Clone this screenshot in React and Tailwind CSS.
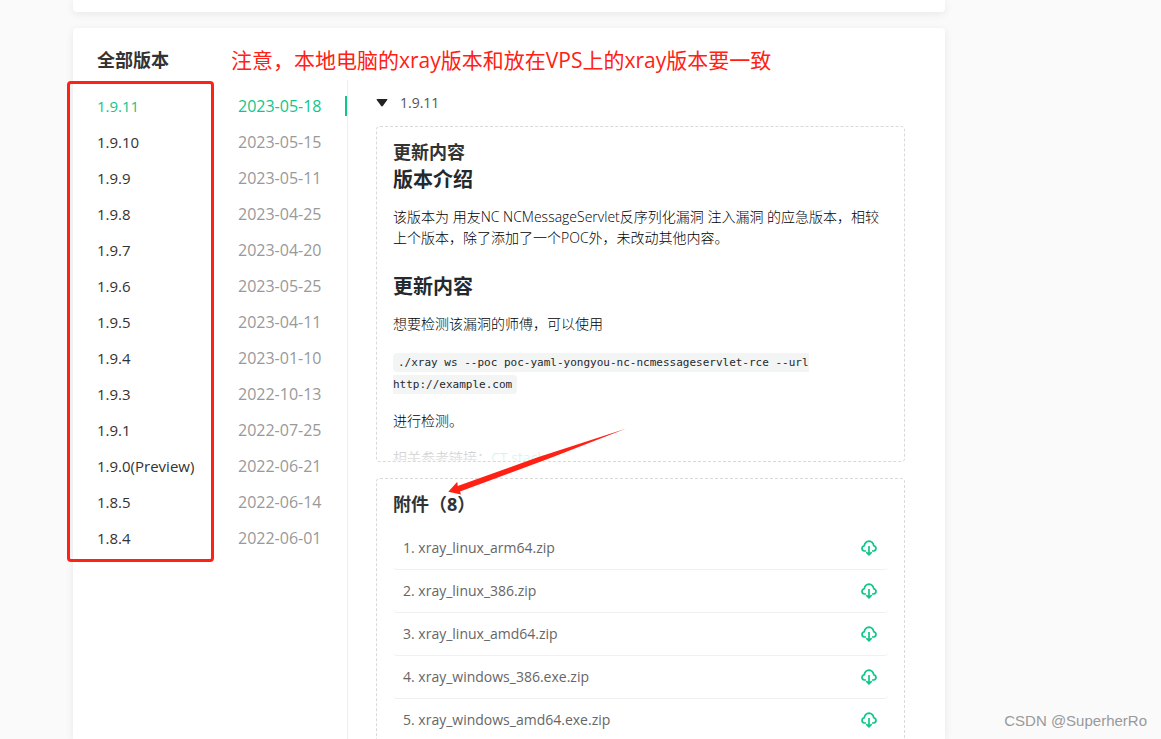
import React, { useState } from 'react';

const versions = [
  { name: '1.9.11', date: '2023-05-18' },
  { name: '1.9.10', date: '2023-05-15' },
  { name: '1.9.9', date: '2023-05-11' },
  { name: '1.9.8', date: '2023-04-25' },
  { name: '1.9.7', date: '2023-04-20' },
  { name: '1.9.6', date: '2023-05-25' },
  { name: '1.9.5', date: '2023-04-11' },
  { name: '1.9.4', date: '2023-01-10' },
  { name: '1.9.3', date: '2022-10-13' },
  { name: '1.9.1', date: '2022-07-25' },
  { name: '1.9.0(Preview)', date: '2022-06-21' },
  { name: '1.8.5', date: '2022-06-14' },
  { name: '1.8.4', date: '2022-06-01' }
];

const files = [
  'xray_linux_arm64.zip',
  'xray_linux_386.zip',
  'xray_linux_amd64.zip',
  'xray_windows_386.exe.zip',
  'xray_windows_amd64.exe.zip'
];

const CloudDownload = () => (
  <svg viewBox="0 0 16 16" className="w-4 h-4" fill="none" stroke="currentColor" strokeWidth="1.7">
    <path d="M5 11H3.4A2.7 2.7 0 0 1 1 8.3Q1 6.3 3.2 5.7Q4.2 1.4 8 1.2Q11.8 1.4 12.8 5.7Q15 6.3 15 8.3A2.7 2.7 0 0 1 12.6 11H11" />
    <path d="M8 6V14.6M5.3 12.2L8 14.8L10.7 12.2" />
  </svg>
);

// Une ligne version + date
const VersionRow = ({ version, active, onSelect }) => (
  <li className="relative">
    <button
      onClick={onSelect}
      className={`flex w-full h-9 items-center pl-6 text-left ${active ? 'text-[#0fc68a]' : 'text-[#333]'}`}
    >
      <span className="w-[141px] text-[15px]">{version.name}</span>
      <span className={active ? 'text-base font-medium' : 'text-base text-[#999]'}>{version.date}</span>
    </button>
    {active && <span className="absolute right-0 top-2 w-[2px] h-5 bg-[#0fc68a]" />}
  </li>
);

const App = () => {
  const [selected, setSelected] = useState('1.9.11');
  const [open, setOpen] = useState(true);

  return (
    <div className="relative h-screen overflow-hidden flex flex-col gap-4 bg-[#fafafa] pl-[73px] pr-[216px] text-[#333] font-['Open_Sans','Noto_Sans_CJK_SC',sans-serif]">
      <div className="h-3 shrink-0 bg-white rounded-b shadow-[0_2px_8px_rgba(0,0,0,0.08)]" />

      <main className="relative flex-1 min-h-0 flex flex-col bg-white rounded-t shadow-[0_2px_8px_rgba(0,0,0,0.08)]">
        <header className="h-[52px] shrink-0 flex items-center pl-6 pt-3">
          <h1 className="w-[134px] text-lg font-bold">全部版本</h1>
          <p className="text-[21px] leading-7 text-[#ff2113] whitespace-nowrap">
            注意，本地电脑的xray版本和放在VPS上的xray版本要一致
          </p>
        </header>

        <div className="flex-1 min-h-0 flex">
          {/* Liste des versions */}
          <ul className="w-[275px] shrink-0 pt-2 border-r border-[#f0f0f0]">
            {versions.map((v) => (
              <VersionRow
                key={v.name}
                version={v}
                active={v.name === selected}
                onSelect={() => setSelected(v.name)}
              />
            ))}
          </ul>

          {/* Détail de la version */}
          <section className="flex-1 min-w-0 pl-7 pr-10">
            <button onClick={() => setOpen(!open)} className="flex items-center h-[46px] text-sm text-[#555]">
              <svg viewBox="0 0 12 8" className="w-3 h-2 mr-3" fill="#222">
                <path d="M1.2 0H10.8Q12 0 11.2 1.1L7 6.8Q6 8 5 6.8L.8 1.1Q0 0 1.2 0Z" />
              </svg>
              {selected}
            </button>

            {open && (
              <article className="relative h-[336px] overflow-hidden border border-dashed border-[#d9d9d9] rounded px-4 pt-3 text-sm leading-[21px] text-[#24292e]">
                <h2 className="text-lg leading-[27px] font-bold text-[#333]">更新内容</h2>
                <h3 className="text-xl leading-[27px] font-bold">版本介绍</h3>
                <p className="mt-[13px] font-light text-black">
                  该版本为 用友NC NCMessageServlet反序列化漏洞 注入漏洞 的应急版本，相较上个版本，除了添加了一个POC外，未改动其他内容。
                </p>
                <h3 className="mt-[25px] text-xl leading-[27px] font-bold">更新内容</h3>
                <p className="mt-[13px] font-light text-black">想要检测该漏洞的师傅，可以使用</p>
                <p className="mt-[18px] text-[11px] leading-[22px] font-['DejaVu_Sans_Mono',monospace]">
                  <code className="bg-[#f3f4f4] rounded px-[5px] py-[3px] font-['DejaVu_Sans_Mono',monospace]">
                    ./xray ws --poc poc-yaml-yongyou-nc-ncmessageservlet-rce --url http://example.com
                  </code>
                </p>
                <p className="mt-[14px] font-light text-black">进行检测。</p>
                <p className="mt-4">
                  相关参考链接：<a href="#ct" className="text-[#0fc68a]">CT stack</a>
                </p>
                <div className="absolute inset-x-0 bottom-0 h-8 bg-linear-to-b from-white/50 to-white/90" />
              </article>
            )}

            <div className="mt-4 h-[320px] border border-dashed border-[#d9d9d9] rounded px-4 pt-3">
              <h2 className="text-lg leading-[27px] font-bold">附件（8）</h2>
              <ul className="mt-[9px]">
                {files.map((file, i) => (
                  <li
                    key={file}
                    className="flex items-center justify-between h-[43px] pl-[10px] pr-[11px] border-b border-[#f0f0f0] rounded text-sm text-[#666]"
                  >
                    <span>{i + 1}. {file}</span>
                    <a href={`#${file}`} aria-label={file} className="text-[#0fc68a]">
                      <CloudDownload />
                    </a>
                  </li>
                ))}
              </ul>
            </div>
          </section>
        </div>

        {/* Annotations rouges */}
        <div className="absolute -left-[6px] top-[53px] w-[147px] h-[481px] border-[3px] border-[#ff2113] rounded pointer-events-none" />
        <svg
          viewBox="0 0 180 68"
          className="absolute left-[374px] top-[400px] w-[180px] h-[68px] pointer-events-none"
          fill="#ff2113"
        >
          <path d="M1.3 63.7L10.3 53.7L10.7 58L90 29.5L178.7 .7L102 30.5L13 63.4L14 66.5Z" />
        </svg>
      </main>

      <p className="absolute right-[14px] bottom-2 text-[15px] leading-5 text-[#999] font-['Liberation_Sans',sans-serif]">
        CSDN @SuperherRo
      </p>
    </div>
  );
};

export default App;
